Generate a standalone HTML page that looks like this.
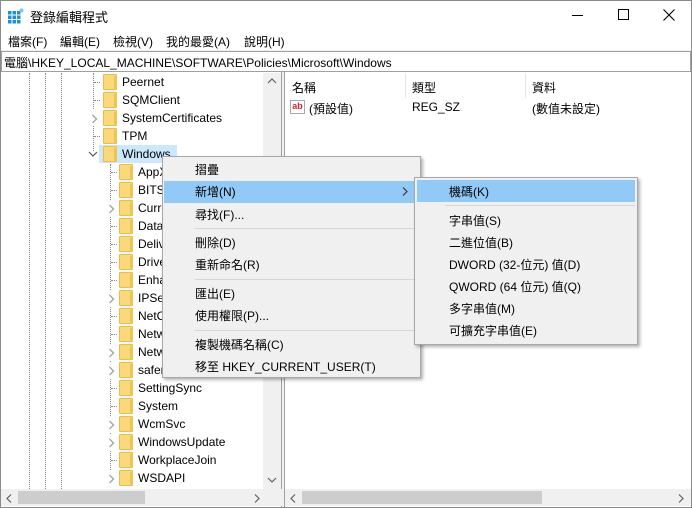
<!DOCTYPE html>
<html><head><meta charset="utf-8"><style>
*{margin:0;padding:0;box-sizing:border-box}
body{width:692px;height:508px;position:relative;overflow:hidden;background:#fff;font-family:"Liberation Sans","Noto Sans CJK TC",sans-serif;font-size:12px;color:#000}
.a{position:absolute;white-space:nowrap}
.f{position:absolute;width:14px;height:16px;background:#fbd87a;border:1px solid #e8bd4c;border-radius:1px}
.f:after{content:"";position:absolute;right:-1px;bottom:-1px;width:3px;height:14px;background:#f0c452}
.dv{position:absolute;border-left:1px dotted #888;width:0}
.dh{position:absolute;border-top:1px dotted #888;height:0;width:6px}
.t{position:absolute;line-height:18px}
.sep{position:absolute;height:1px;background:#d5d5d5}
</style></head><body>
<div class="a" style="left:0;top:0;width:692px;height:508px;border:1px solid #8a8a8a"></div>
<svg class="a" style="left:8px;top:8px" width="16" height="16"><g fill="#1e90d8"><rect x="0" y="3" width="3.5" height="3.5"/><rect x="4.5" y="3" width="3.5" height="3.5"/><rect x="9" y="3" width="3.5" height="3.5"/><rect x="0" y="7.5" width="3.5" height="3.5"/><rect x="4.5" y="7.5" width="3.5" height="3.5"/><rect x="9" y="7.5" width="3.5" height="3.5"/><rect x="0" y="12" width="3.5" height="3.5"/><rect x="4.5" y="12" width="3.5" height="3.5"/><rect x="9" y="12" width="3.5" height="3.5"/></g><circle cx="13.5" cy="2.5" r="2" fill="#7cc8f0"/></svg>
<div class="a" style="left:30px;top:7px;font-size:13px">登錄編輯程式</div>
<div class="a" style="left:572px;top:15px;width:11px;height:1px;background:#000"></div>
<div class="a" style="left:618px;top:9px;width:11px;height:11px;border:1px solid #000"></div>
<svg class="a" style="left:663px;top:9px" width="12" height="12"><path d="M0.5 0.5L11.5 11.5M11.5 0.5L0.5 11.5" stroke="#000" stroke-width="1.1"/></svg>
<div class="a" style="left:8px;top:33px">檔案(F)</div>
<div class="a" style="left:60px;top:33px">編輯(E)</div>
<div class="a" style="left:113px;top:33px">檢視(V)</div>
<div class="a" style="left:166px;top:33px">我的最愛(A)</div>
<div class="a" style="left:244px;top:33px">說明(H)</div>
<div class="a" style="left:1px;top:50px;width:690px;height:2px;background:#f0f0f0"></div>
<div class="a" style="left:1px;top:51px;width:690px;height:21px;border:1px solid #a0a0a0;background:#fff"></div>
<div class="a" style="left:4px;top:54px">電腦\HKEY_LOCAL_MACHINE\SOFTWARE\Policies\Microsoft\Windows</div>
<div class="a" style="left:1px;top:72px;width:281px;height:435px;border-right:1px solid #a0a0a0"></div>
<div class="a" style="left:282px;top:72px;width:3px;height:435px;background:#f0f0f0"></div>
<div class="a" style="left:284px;top:72px;width:1px;height:435px;background:#a0a0a0"></div>
<div class="a" style="left:263px;top:73px;width:18px;height:416px;background:#f0f0f0"></div>
<svg class="a" style="left:267px;top:78px" width="10" height="7"><path d="M1 5L5 1L9 5" fill="none" stroke="#606060" stroke-width="1.2"/></svg>
<svg class="a" style="left:267px;top:477px" width="10" height="7"><path d="M1 1L5 5L9 1" fill="none" stroke="#606060" stroke-width="1.2"/></svg>
<div class="a" style="left:1px;top:489px;width:281px;height:17px;background:#f0f0f0"></div>
<div class="a" style="left:18px;top:491px;width:127px;height:13px;background:#cdcdcd"></div>
<svg class="a" style="left:6px;top:494px" width="6" height="9"><path d="M5 0.5L1 4.5L5 8.5" fill="none" stroke="#606060" stroke-width="1.2"/></svg>
<svg class="a" style="left:254px;top:494px" width="6" height="9"><path d="M1 0.5L5 4.5L1 8.5" fill="none" stroke="#606060" stroke-width="1.2"/></svg>
<div class="a" style="left:285px;top:489px;width:406px;height:17px;background:#f0f0f0"></div>
<div class="a" style="left:302px;top:491px;width:240px;height:13px;background:#cdcdcd"></div>
<svg class="a" style="left:290px;top:494px" width="6" height="9"><path d="M5 0.5L1 4.5L5 8.5" fill="none" stroke="#606060" stroke-width="1.2"/></svg>
<svg class="a" style="left:678px;top:494px" width="6" height="9"><path d="M1 0.5L5 4.5L1 8.5" fill="none" stroke="#606060" stroke-width="1.2"/></svg>
<div class="a" style="left:292px;top:79px">名稱</div>
<div class="a" style="left:405px;top:74px;width:1px;height:24px;background:#e5e5e5"></div>
<div class="a" style="left:412px;top:79px">類型</div>
<div class="a" style="left:525px;top:74px;width:1px;height:24px;background:#e5e5e5"></div>
<div class="a" style="left:532px;top:79px">資料</div>
<div class="a" style="left:290px;top:100px;width:15px;height:14px;border:1px solid #aaa;background:#fff;color:#d23;font-size:9px;font-weight:bold;line-height:11px;text-align:center">ab</div>
<div class="a" style="left:309px;top:100px">(預設值)</div>
<div class="a" style="left:412px;top:100px">REG_SZ</div>
<div class="a" style="left:532px;top:100px">(數值未設定)</div>
<div class="dv" style="left:29px;top:73px;height:416px"></div>
<div class="dv" style="left:45px;top:73px;height:416px"></div>
<div class="dv" style="left:61px;top:73px;height:416px"></div>
<div class="dv" style="left:93px;top:73px;height:78px"></div>
<div class="dv" style="left:110px;top:164px;height:314px"></div>
<div class="a" style="left:99px;top:145px;width:78px;height:18px;background:#cce8ff"></div>
<div id="tree"></div>
<script>
var A=[["Peernet",0],["SQMClient",0],["SystemCertificates",1],["TPM",0],["Windows",2]];
var C=[["AppX",0],["BITS",0],["CurrentVersion",1],["DataCollection",0],["DeliveryOptimization",0],["DriverSearching",0],["EnhancedStorageDevices",0],["IPSec",1],["NetCache",0],["NetworkConnections",0],["NetworkProvider",1],["safer",1],["SettingSync",0],["System",0],["WcmSvc",1],["WindowsUpdate",1],["WorkplaceJoin",0],["WSDAPI",1]];
var h="";
function row(n,e,y,fx,lx){
 if(e==0)h+='<div class="dh" style="left:'+lx+'px;top:'+(y+9)+'px"></div>';
 else if(e==1)h+='<div class="a" style="left:'+(lx-4)+'px;top:'+(y+1)+'px;width:12px;height:16px;background:#fff"></div><svg class="a" style="left:'+(lx-3)+'px;top:'+(y+5)+'px" width="7" height="10"><path d="M1.5 1L5.5 5L1.5 9" fill="none" stroke="#a6a6a6" stroke-width="1.4"/></svg>';
 else h+='<svg class="a" style="left:'+(lx-6)+'px;top:'+(y+6)+'px" width="10" height="7"><path d="M1 1L5 5L9 1" fill="none" stroke="#555" stroke-width="1.2"/></svg>';
 h+='<div class="f" style="left:'+fx+'px;top:'+(y+1)+'px"></div><div class="t" style="left:'+(fx+19)+'px;top:'+y+'px;z-index:2">'+n+'</div>';
}
A.forEach(function(r,i){row(r[0],r[1],73+i*18,103,94)});
C.forEach(function(r,i){row(r[0],r[1],163+i*18,119,111)});
document.getElementById("tree").innerHTML=h;
</script>
<div class="a" style="left:162px;top:156px;width:259px;height:222px;background:#f0f0f0;border:1px solid #a8a8a8;box-shadow:2px 2px 3px rgba(0,0,0,.3);z-index:5">
 <div class="a" style="left:1px;top:24px;width:255px;height:22px;background:#91c9f7"></div>
 <div class="sep" style="left:32px;top:71px;width:222px"></div>
 <div class="sep" style="left:32px;top:122px;width:222px"></div>
 <div class="sep" style="left:32px;top:173px;width:222px"></div>
 <div class="a" style="left:32px;top:4px">摺疊</div>
 <div class="a" style="left:32px;top:26px">新增(N)</div>
 <svg class="a" style="left:239px;top:30px" width="6" height="9"><path d="M1 0.5L5 4.5L1 8.5" fill="none" stroke="#333" stroke-width="1.1"/></svg>
 <div class="a" style="left:32px;top:49px">尋找(F)...</div>
 <div class="a" style="left:32px;top:77px">刪除(D)</div>
 <div class="a" style="left:32px;top:99px">重新命名(R)</div>
 <div class="a" style="left:32px;top:128px">匯出(E)</div>
 <div class="a" style="left:32px;top:150px">使用權限(P)...</div>
 <div class="a" style="left:32px;top:179px">複製機碼名稱(C)</div>
 <div class="a" style="left:32px;top:201px">移至 HKEY_CURRENT_USER(T)</div>
</div>
<div class="a" style="left:414px;top:177px;width:224px;height:168px;background:#f0f0f0;border:1px solid #a8a8a8;box-shadow:2px 2px 3px rgba(0,0,0,.3);z-index:6">
 <div class="a" style="left:2px;top:2px;width:218px;height:22px;background:#91c9f7"></div>
 <div class="sep" style="left:30px;top:27px;width:190px"></div>
 <div class="a" style="left:34px;top:5px">機碼(K)</div>
 <div class="a" style="left:34px;top:34px">字串值(S)</div>
 <div class="a" style="left:34px;top:56px">二進位值(B)</div>
 <div class="a" style="left:34px;top:78px">DWORD (32-位元) 值(D)</div>
 <div class="a" style="left:34px;top:100px">QWORD (64 位元) 值(Q)</div>
 <div class="a" style="left:34px;top:122px">多字串值(M)</div>
 <div class="a" style="left:34px;top:144px">可擴充字串值(E)</div>
</div>
</body></html>
